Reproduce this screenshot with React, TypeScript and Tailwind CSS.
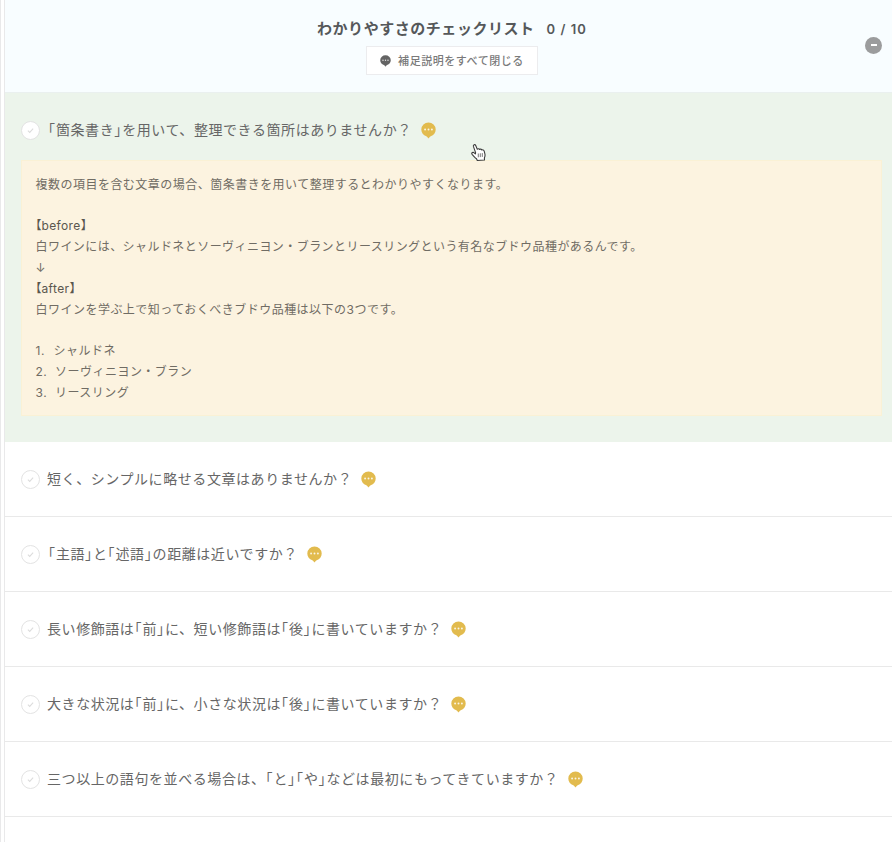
import { Fragment } from "react";

function HalfBrackets({ text }: { text: string }) {
  return (
    <>
      {text.split(/([「」【】])/).map((part, i) =>
        /^[「」【】]$/.test(part) ? (
          <span
            key={i}
            className={
              /[「」]/.test(part)
                ? "font-['Noto_Sans_CJK_JP',sans-serif] leading-none tracking-[0.065em] [font-feature-settings:'halt']"
                : "font-['Noto_Sans_CJK_JP',sans-serif] leading-none tracking-normal [font-feature-settings:'halt']"
            }
          >
            {part}
          </span>
        ) : (
          <Fragment key={i}>{part}</Fragment>
        )
      )}
    </>
  );
}

function Bubble({ className }: { className: string }) {
  return (
    <svg viewBox="0 0 15 17" preserveAspectRatio="none" className={className}>
      <path
        fill="currentColor"
        d="M7.5.5A7.2 7.1 0 0 0 .3 7.5c0 3.2 2 5.8 5 6.7.8.3 1.3.9 1.7 1.8.2.4.8.4 1 0 .4-.9.9-1.5 1.7-1.8 3-.9 5-3.5 5-6.7A7.2 7.1 0 0 0 7.5.5Z"
      />
      <g fill="#fff" fillOpacity=".85">
        <circle cx="4.1" cy="7.5" r=".95" />
        <circle cx="7.5" cy="7.5" r=".95" />
        <circle cx="10.9" cy="7.5" r=".95" />
      </g>
    </svg>
  );
}

function Check() {
  return (
    <span className="flex size-[19px] shrink-0 items-center justify-center rounded-full border border-[#e3e3e3] bg-white">
      <svg viewBox="0 0 8 8" className="size-[7px]" fill="none" stroke="#dcdcdc" strokeWidth="1.2">
        <path d="M1 4.2 3.1 6.2 7 1.8" />
      </svg>
    </span>
  );
}

function Question({ text }: { text: string }) {
  return (
    <div className="flex h-[74px] items-center pl-4">
      <Check />
      <span
        className={`${text.startsWith("「") ? "ml-[8px]" : "ml-[7px]"} whitespace-nowrap text-[14px] leading-5 tracking-[0.041em] text-[#666]`}
      >
        <HalfBrackets text={text} />
      </span>
      <Bubble className="ml-[9px] h-[17px] w-[15px] text-[#e2bb4e]" />
    </div>
  );
}

const questions = [
  "短く、シンプルに略せる文章はありませんか？",
  "「主語」と「述語」の距離は近いですか？",
  "長い修飾語は「前」に、短い修飾語は「後」に書いていますか？",
  "大きな状況は「前」に、小さな状況は「後」に書いていますか？",
  "三つ以上の語句を並べる場合は、「と」「や」などは最初にもってきていますか？",
];

const steps = ["シャルドネ", "ソーヴィニヨン・ブラン", "リースリング"];

export default function App() {
  return (
    <div className="flex h-[842px] w-[892px] overflow-hidden bg-white font-['Inter','Noto_Sans_CJK_JP',sans-serif]" lang="ja">
      <div className="w-[5px] shrink-0 border-x border-[#e9e9ea] bg-white" />
      <main className="relative min-w-0 flex-1">
        <header className="flex h-[93px] items-center border-b border-[#eaf0ef] bg-[#f8fdff]">
          <div className="flex flex-1 flex-col items-center pt-px pl-[34px]">
            <h1 className="flex items-center whitespace-nowrap text-[15px] leading-[22px] font-bold tracking-[0.036em] text-[#55585a]">
              わかりやすさのチェックリスト
              <span className="ml-[12px] text-[13px] font-semibold tracking-[0.08em]">0 / 10</span>
            </h1>
            <button className="mt-[6px] flex h-[29px] w-[172px] items-center justify-center border border-[#ececee] bg-white pt-px text-[11px] font-medium tracking-[0.05em] text-[#7a7a7a]">
              <Bubble className="mr-[7px] h-[12px] w-[11px] text-[#646464]" />
              補足説明をすべて閉じる
            </button>
          </div>
          <button className="mr-[10px] mb-[2px] flex size-[17px] items-center justify-center rounded-full bg-[#9b9c9d]">
            <span className="h-[2px] w-[6px] bg-white" />
          </button>
        </header>

        <section className="h-[349px] bg-[#ecf4eb] pr-[10px]">
          <Question text="「箇条書き」を用いて、整理できる箇所はありませんか？" />
          <div className="-mt-[7px] ml-4 h-[256px] border border-[#faf1d5] bg-[#fcf3e0] pt-[13.5px] pl-[13.5px] text-[12px] leading-[20.85px] tracking-[0.04em] text-[#706c64]">
            <p>複数の項目を含む文章の場合、箇条書きを用いて整理するとわかりやすくなります。</p>
            <br />
            <p className="tracking-[0.03em] text-[#5a564e]"><HalfBrackets text="【before】" /></p>
            <p className="tracking-[0.44px]">白ワインには、シャルドネとソーヴィニヨン・ブランとリースリングという有名なブドウ品種があるんです。</p>
            <p>↓</p>
            <p className="tracking-[0.03em] text-[#5a564e]"><HalfBrackets text="【after】" /></p>
            <p>白ワインを学ぶ上で知っておくべきブドウ品種は以下の3つです。</p>
            <br />
            <ol>
              {steps.map((step, i) => (
                <li key={step} className="flex">
                  <span className={i === 0 ? "w-[18px]" : "w-[19.5px]"}>{i + 1}.</span>
                  {step}
                </li>
              ))}
            </ol>
          </div>
        </section>

        {questions.map((q) => (
          <div key={q} className="border-b border-[#e9e9e9]">
            <Question text={q} />
          </div>
        ))}

        <svg viewBox="0 0 18 20" className="absolute top-[142px] left-[464px] h-[20px] w-[18px]">
          <path
            d="M6.6 10.6 4.4 4.4C3.9 2.6 6 1.9 6.7 3.5l1.6 3.8c.5-.9 1.9-.8 2.3.2.6-.7 1.9-.5 2.2.5.9-.5 2.1.1 2.4 1.2l.8 3.2c.3 1.4-.1 2.4-.6 3.5l.1 2.1-7.2.5-.8-1.8c-1.5-.9-2.7-2.6-4.4-4.3-1-1.2.3-2.6 1.7-1.8l1.6 1.3Z"
            fill="#fff"
            stroke="#3c3c3c"
            strokeWidth="1.1"
            strokeLinejoin="round"
          />
          <path d="M9.3 11.5V15.3M11.3 11.3v3.8M13.3 11.1v3.8" stroke="#555" strokeWidth=".8" />
        </svg>
      </main>
    </div>
  );
}
